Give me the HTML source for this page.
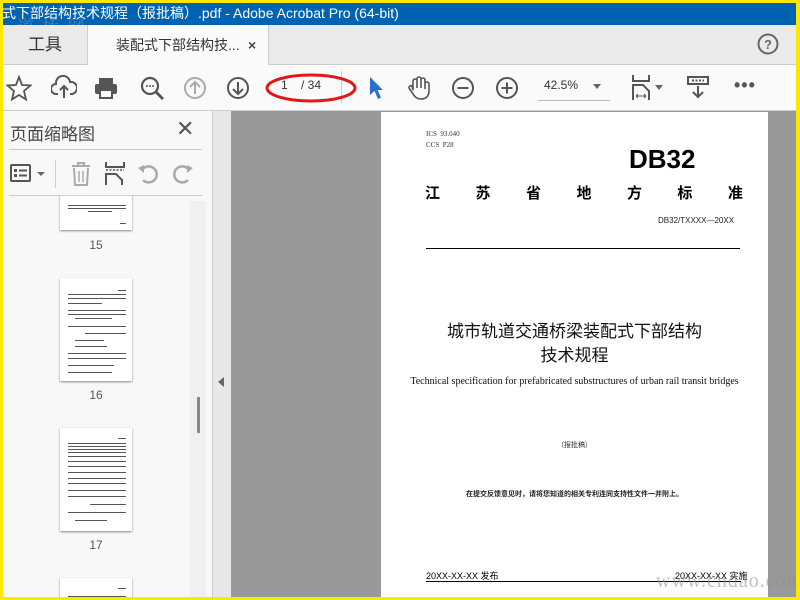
<!DOCTYPE html>
<html><head><meta charset="utf-8"><style>
*{margin:0;padding:0;box-sizing:border-box}
body{width:800px;height:600px;overflow:hidden;background:#ffe800;position:relative;font-family:"Liberation Sans","Noto Sans CJK SC",sans-serif}
.a{position:absolute}
.cj{font-family:"Liberation Sans","Noto Sans CJK SC",sans-serif}
.sf{font-family:"Liberation Serif","Noto Serif CJK SC",serif}
.th{position:absolute;left:57px;width:72px;background:#fff;box-shadow:0 1px 2px #888;}
.th i{position:absolute;left:8px;right:6px;height:1px;background:#555;display:block}
.lbl{position:absolute;left:57px;width:72px;text-align:center;font-size:12px;color:#555}
svg{position:absolute}
</style></head><body>
<div class="a" style="left:3px;top:3px;width:793px;height:594px;background:#f8f8f8;overflow:hidden">
<div class="a cj" style="left:-1px;top:0;width:794px;height:22px;background:#0063b1;color:#fff;font-size:14px;line-height:20px">式下部结构技术规程（报批稿）.pdf - Adobe Acrobat Pro (64-bit)</div>
<div class="a sf" style="left:14px;top:10px;font-size:17px;color:rgba(150,150,170,.6);letter-spacing:2px">道 桥 网</div>
<div class="a" style="left:0;top:22px;width:793px;height:40px;background:#eaeaea;border-bottom:1px solid #ccc"></div>
<div class="a cj" style="left:0;top:22px;width:84px;height:40px;font-size:17px;color:#333;text-align:center;line-height:40px">工具</div>
<div class="a cj" style="left:84px;top:22px;width:182px;height:41px;background:#fafafa;border-left:1px solid #ccc;border-right:1px solid #ccc;font-size:14px;color:#333;line-height:40px;padding-left:28px">装配式下部结构技...<span style="position:absolute;left:160px;font-size:14px;font-weight:bold;color:#444">×</span></div>
<svg style="left:754px;top:30px" width="22" height="22"><circle cx="11" cy="11" r="9.5" fill="none" stroke="#666" stroke-width="2"/><text x="11" y="16" font-size="13" font-weight="bold" fill="#666" text-anchor="middle" font-family="Liberation Sans">?</text></svg>
<div class="a" style="left:0;top:62px;width:793px;height:46px;background:#fafafa;border-bottom:1px solid #ccc"></div>
<svg style="left:3px;top:72px" width="26" height="26"><path d="M13 2 L16 10 L24.5 10.5 L18 16 L20 24.5 L13 20 L6 24.5 L8 16 L1.5 10.5 L10 10 Z" fill="none" stroke="#555" stroke-width="1.8"/></svg>
<svg style="left:48px;top:72px" width="26" height="26"><path d="M7 19 H5 A5 5 0 0 1 5 9 A7 7 0 0 1 19 7 A5 5 0 0 1 21 19 H19" fill="none" stroke="#555" stroke-width="2"/><path d="M13 23 V11 M9 15 L13 11 L17 15" fill="none" stroke="#555" stroke-width="2"/></svg>
<svg style="left:90px;top:72px" width="26" height="26"><rect x="6" y="3" width="14" height="6" fill="#555"/><rect x="2" y="9" width="22" height="10" rx="2" fill="#555"/><rect x="7" y="15" width="12" height="8" fill="#fafafa" stroke="#555" stroke-width="2"/></svg>
<svg style="left:136px;top:72px" width="26" height="26"><circle cx="11" cy="11" r="8" fill="none" stroke="#555" stroke-width="2.2"/><path d="M17 17 L24 24" stroke="#555" stroke-width="2.8"/><circle cx="8" cy="11" r="1" fill="#555"/><circle cx="11" cy="11" r="1" fill="#555"/><circle cx="14" cy="11" r="1" fill="#555"/></svg>
<svg style="left:180px;top:73px" width="24" height="24"><circle cx="12" cy="12" r="10" fill="none" stroke="#aaa" stroke-width="2"/><path d="M12 18 V6 M7 11 L12 6 L17 11" fill="none" stroke="#aaa" stroke-width="2"/></svg>
<svg style="left:223px;top:73px" width="24" height="24"><circle cx="12" cy="12" r="10" fill="none" stroke="#555" stroke-width="2"/><path d="M12 6 V18 M7 13 L12 18 L17 13" fill="none" stroke="#555" stroke-width="2"/></svg>
<div class="a" style="left:278px;top:75px;font-size:12px;color:#333">1</div>
<div class="a" style="left:298px;top:75px;font-size:12px;color:#333">/ 34</div>
<div class="a" style="left:338px;top:68px;width:1px;height:32px;background:#ccc"></div>
<svg style="left:260px;top:64px" width="100" height="40"><ellipse cx="48" cy="21" rx="44" ry="13" fill="none" stroke="#e01818" stroke-width="3"/></svg>
<svg style="left:364px;top:72px" width="18" height="26"><path d="M3 2 L3 20 L7.5 16 L11 24 L14 22.5 L10.5 15 L16 15 Z" fill="#2a70c8"/></svg>
<svg style="left:403px;top:71px" width="26" height="28"><path d="M7 16 V7 a2 2 0 0 1 4 0 V14 V5 a2 2 0 0 1 4 0 V14 V6 a2 2 0 0 1 4 0 V15 V10 a2 2 0 0 1 4 0 V17 c0 5 -3 8 -8 8 c-4 0 -6 -2 -8 -5 l-4 -6 a2 2 0 0 1 3 -2 Z" fill="none" stroke="#555" stroke-width="1.6"/></svg>
<svg style="left:448px;top:73px" width="24" height="24"><circle cx="12" cy="12" r="10" fill="none" stroke="#555" stroke-width="2"/><path d="M6.5 12 H17.5" stroke="#555" stroke-width="2"/></svg>
<svg style="left:492px;top:73px" width="24" height="24"><circle cx="12" cy="12" r="10" fill="none" stroke="#555" stroke-width="2"/><path d="M6.5 12 H17.5 M12 6.5 V17.5" stroke="#555" stroke-width="2"/></svg>
<div class="a" style="left:541px;top:75px;font-size:12px;color:#333">42.5%</div>
<div class="a" style="left:590px;top:81px;border-left:4px solid transparent;border-right:4px solid transparent;border-top:5px solid #666"></div>
<div class="a" style="left:535px;top:97px;width:72px;height:1px;background:#bbb"></div>
<svg style="left:628px;top:71px" width="34" height="28"><path d="M2 1 V7 H18 V1" fill="none" stroke="#555" stroke-width="2"/><path d="M2 26 V11 H12 L18 17 V26" fill="none" stroke="#555" stroke-width="2"/><path d="M5 22 H15 M5 22 l2 -2 M5 22 l2 2 M15 22 l-2 -2 M15 22 l-2 2" stroke="#555" stroke-width="1"/><path d="M24 11 L32 11 L28 16 Z" fill="#666"/></svg>
<svg style="left:683px;top:72px" width="26" height="26"><rect x="2" y="2" width="20" height="7" fill="none" stroke="#555" stroke-width="2"/><path d="M6 5.5 H18" stroke="#555" stroke-width="2" stroke-dasharray="2 1.5"/><path d="M12 11 V22 M7 17 L12 22 L17 17" fill="none" stroke="#555" stroke-width="2"/></svg>
<div class="a" style="left:731px;top:72px;font-size:18px;color:#555;letter-spacing:1px;font-weight:bold">•••</div>
<div class="a cj" style="left:7px;top:117px;font-size:17px;color:#444">页面缩略图</div>
<div class="a" style="left:173px;top:113px;font-size:22px;color:#555">✕</div>
<div class="a" style="left:6px;top:146px;width:193px;height:1px;background:#ccc"></div>
<svg style="left:7px;top:160px" width="40" height="24"><rect x="1" y="2" width="19" height="16" rx="1" fill="none" stroke="#555" stroke-width="2"/><rect x="4" y="6" width="3" height="3" fill="#555"/><rect x="4" y="11" width="3" height="3" fill="#555"/><path d="M9 7.5 H17 M9 12.5 H17" stroke="#555" stroke-width="2"/><path d="M27 9 L35 9 L31 13 Z" fill="#666"/></svg>
<div class="a" style="left:52px;top:157px;width:1px;height:28px;background:#ccc"></div>
<svg style="left:66px;top:158px" width="24" height="26"><path d="M3 5 H21 M9 5 V2 H15 V5" fill="none" stroke="#aaa" stroke-width="2"/><path d="M5 7 L6 24 H18 L19 7" fill="none" stroke="#aaa" stroke-width="2"/><path d="M10 10 V21 M14 10 V21" stroke="#aaa" stroke-width="1.5"/></svg>
<svg style="left:101px;top:158px" width="24" height="26"><path d="M2 1 V6 H20 V1" fill="none" stroke="#555" stroke-width="2"/><path d="M2 9 H20" stroke="#555" stroke-width="1.5" stroke-dasharray="2 1.5"/><path d="M2 24 V13 H12 L18 19 V24" fill="none" stroke="#555" stroke-width="2"/></svg>
<svg style="left:134px;top:159px" width="24" height="24"><path d="M6 18 A8 8 0 1 0 5 8" fill="none" stroke="#aaa" stroke-width="2.5"/><path d="M1 6 L7 3 L7 11 Z" fill="#aaa"/></svg>
<svg style="left:167px;top:159px" width="24" height="24"><path d="M18 18 A8 8 0 1 1 19 8" fill="none" stroke="#aaa" stroke-width="2.5"/><path d="M23 6 L17 3 L17 11 Z" fill="#aaa"/></svg>
<div class="a" style="left:6px;top:192px;width:193px;height:1px;background:#ccc"></div>
<div class="a" style="left:187px;top:198px;width:16px;height:396px;background:#f0f0f0"></div>
<div class="a" style="left:194px;top:394px;width:3px;height:36px;background:#888"></div>
<div class="a" style="left:0;top:193px;width:187px;height:401px;overflow:hidden">
<div class="th" style="top:-33px;height:67px"><i style="top:42px"></i><i style="top:45px"></i><i style="top:48px;left:28px;right:20px"></i><i style="top:60px;left:60px"></i></div>
<div class="lbl" style="top:42px">15</div>
<div class="th" style="top:82px;height:103px"><i style="top:12px;left:58px"></i><i style="top:16px"></i><i style="top:20px"></i><i style="top:25px;right:30px"></i><i style="top:32px"></i><i style="top:36px"></i><i style="top:40px;left:15px;right:20px"></i><i style="top:48px"></i><i style="top:55px;left:25px"></i><i style="top:62px;left:15px;right:28px"></i><i style="top:68px;left:15px;right:25px"></i><i style="top:75px"></i><i style="top:80px"></i><i style="top:87px;right:18px"></i><i style="top:94px;right:20px"></i></div>
<div class="lbl" style="top:192px">16</div>
<div class="th" style="top:232px;height:103px"><i style="top:10px;left:58px"></i><i style="top:15px"></i><i style="top:18px"></i><i style="top:21px"></i><i style="top:24px"></i><i style="top:28px"></i><i style="top:33px"></i><i style="top:38px"></i><i style="top:44px"></i><i style="top:50px"></i><i style="top:55px"></i><i style="top:62px"></i><i style="top:68px"></i><i style="top:76px;left:30px"></i><i style="top:84px"></i><i style="top:92px;left:15px;right:25px"></i></div>
<div class="lbl" style="top:342px">17</div>
<div class="th" style="top:382px;height:40px"><i style="top:10px;left:58px"></i><i style="top:18px"></i><i style="top:24px"></i></div>
</div>
<div class="a" style="left:209px;top:108px;width:1px;height:486px;background:#ccc"></div>
<div class="a" style="left:210px;top:108px;width:18px;height:486px;background:#e8e8e8"></div>
<div class="a" style="left:215px;top:374px;border-top:5px solid transparent;border-bottom:5px solid transparent;border-right:6px solid #666"></div>
<div class="a" style="left:228px;top:108px;width:565px;height:486px;background:#999"></div>
<div class="a" style="left:378px;top:109px;width:387px;height:485px;background:#fff">
 <div class="a sf" style="left:45px;top:17px;font-size:7px;color:#333;line-height:11px">ICS&nbsp; 93.040<br>CCS&nbsp; P28</div>
 <div class="a" style="left:248px;top:32px;font-size:26px;font-weight:bold;color:#000">DB32</div>
 <div class="a cj" style="left:44px;top:70px;width:318px;font-size:15px;font-weight:bold;display:flex;justify-content:space-between"><span>江</span><span>苏</span><span>省</span><span>地</span><span>方</span><span>标</span><span>准</span></div>
 <div class="a" style="left:277px;top:104px;font-size:8px;color:#222">DB32/TXXXX—20XX</div>
 <div class="a" style="left:45px;top:136px;width:314px;height:1px;background:#000"></div>
 <div class="a cj" style="left:0;top:208px;width:387px;text-align:center;font-size:17px;line-height:24px;color:#111">城市轨道交通桥梁装配式下部结构<br>技术规程</div>
 <div class="a sf" style="left:0;top:264px;width:387px;text-align:center;font-size:10px;color:#111">Technical specification for prefabricated substructures of urban rail transit bridges</div>
 <div class="a cj" style="left:0;top:328px;width:387px;text-align:center;font-size:7px;color:#333">（报批稿）</div>
 <div class="a cj" style="left:0;top:377px;width:387px;text-align:center;font-size:7px;font-weight:bold;color:#222">在提交反馈意见时，请将您知道的相关专利连同支持性文件一并附上。</div>
 <div class="a cj" style="left:45px;top:457px;font-size:9px;color:#000">20XX-XX-XX 发布</div>
 <div class="a cj" style="left:294px;top:457px;font-size:9px;color:#000">20XX-XX-XX 实施</div>
 <div class="a" style="left:45px;top:469px;width:315px;height:1px;background:#000"></div>
 <div class="a sf" style="left:275px;top:458px;font-size:20px;color:rgba(140,140,140,.55);letter-spacing:1px">www.cndao.com</div>
</div>
</div>
</body></html>
